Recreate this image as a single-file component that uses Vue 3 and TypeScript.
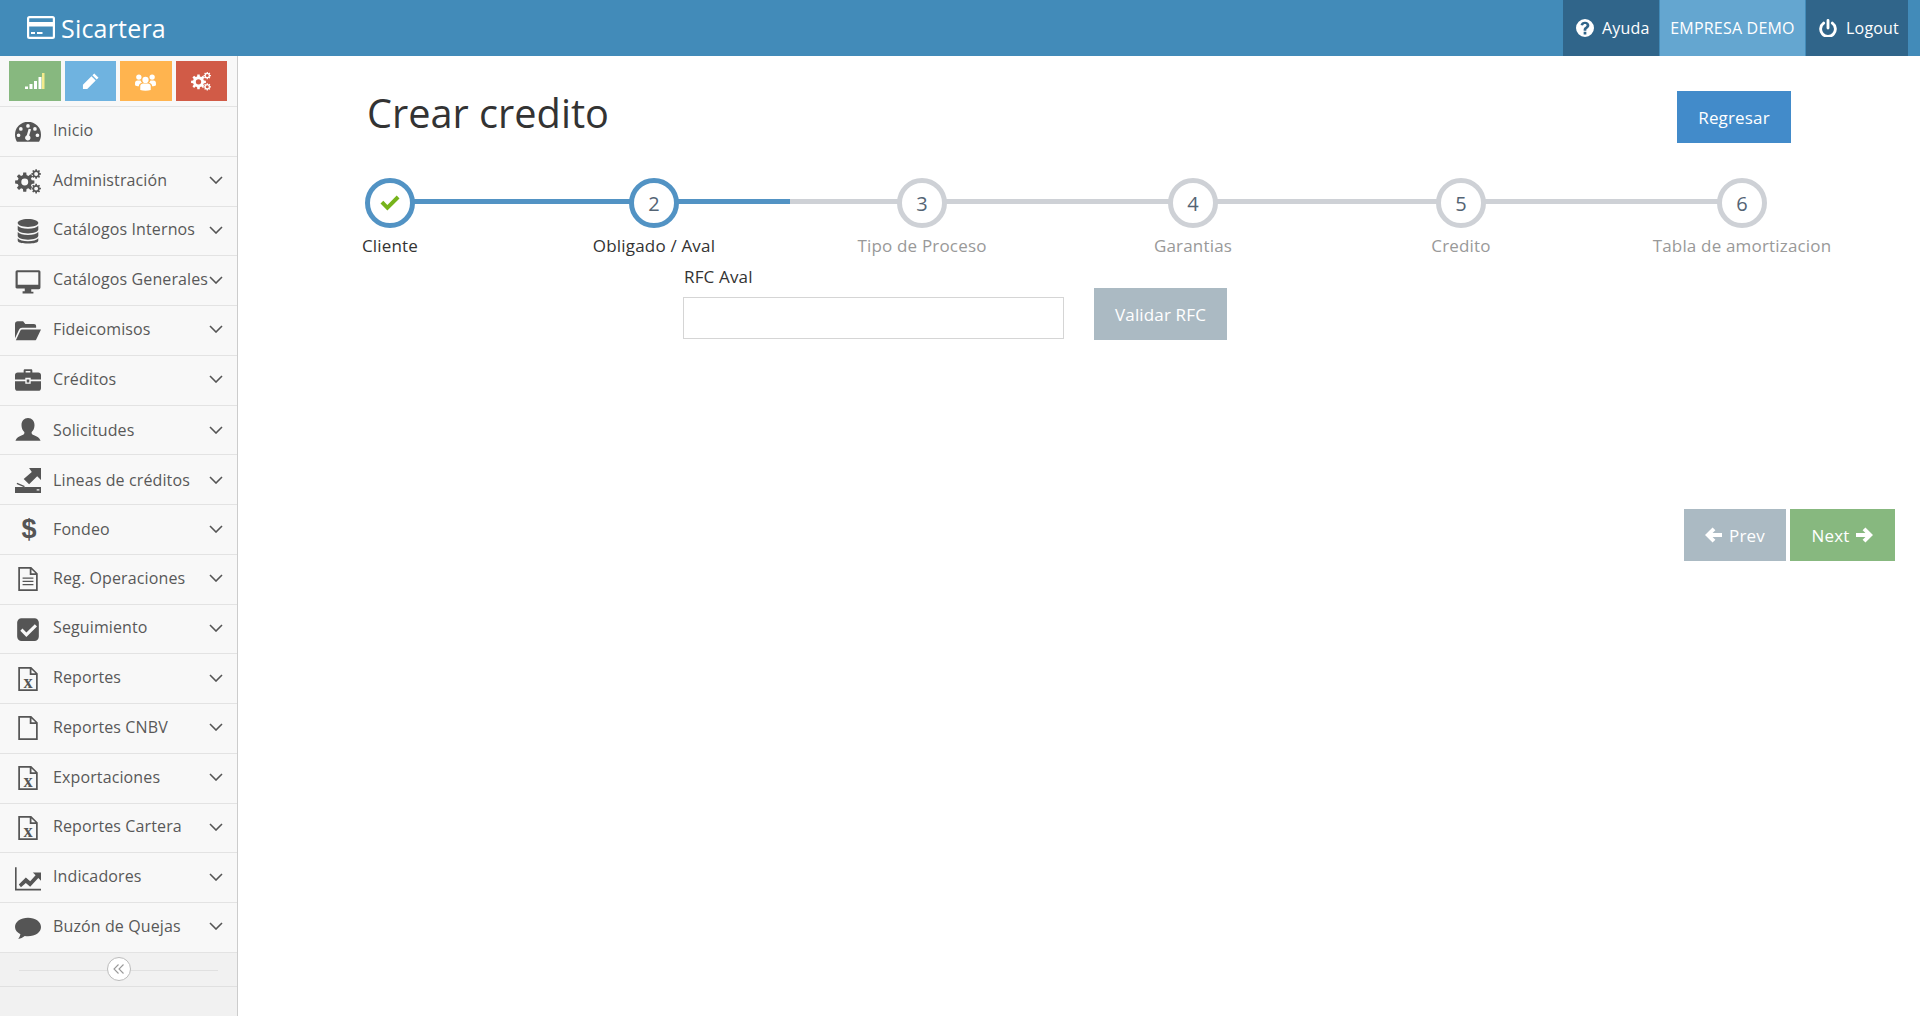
<script setup lang="ts">
function gear(cx: number, cy: number, r: number, hole: number, teeth: number): string {
  const out: string[] = []
  const step = (Math.PI * 2) / teeth
  const tip = r
  const root = r * 0.74
  for (let i = 0; i < teeth; i++) {
    const a = i * step
    const w = step * 0.2
    const pts: [number, number][] = [
      [root, a - step * 0.32],
      [tip, a - w],
      [tip, a + w],
      [root, a + step * 0.32]
    ]
    for (const [rad, ang] of pts) {
      const x = cx + rad * Math.cos(ang)
      const y = cy + rad * Math.sin(ang)
      out.push(`${out.length === 0 ? 'M' : 'L'}${x.toFixed(2)} ${y.toFixed(2)}`)
    }
  }
  out.push('Z')
  out.push(`M${cx - hole} ${cy}a${hole} ${hole} 0 1 0 ${hole * 2} 0a${hole} ${hole} 0 1 0 ${-hole * 2} 0Z`)
  return out.join('')
}

const cogs = gear(9, 13, 9, 3.2, 8)
const smallCogs = [gear(19.5, 5.5, 4.5, 1.8, 8), gear(19.5, 19, 4.5, 1.8, 8)]
const allCogs = cogs + smallCogs.join('')

const fileOutline = 'M3 1h12l6 6v16H3ZM4.6 2.6v18.8h14.8V8.4H13.6V2.6ZM15.2 3.2v3.6h3.6Z'
const icons: Record<string, string> = {
  dashboard:
    'M12 3.5A12 12 0 0 0 0 15.5c0 2.6.7 4.7 1.8 6.5h20.4c1.1-1.8 1.8-3.9 1.8-6.5a12 12 0 0 0-12-12ZM12 5.6a1.7 1.7 0 1 1 0 3.4a1.7 1.7 0 1 1 0-3.4ZM5.4 8.4a1.7 1.7 0 1 1 0 3.4a1.7 1.7 0 1 1 0-3.4ZM3.3 14.2a1.7 1.7 0 1 1 0 3.4a1.7 1.7 0 1 1 0-3.4ZM20.7 14.2a1.7 1.7 0 1 1 0 3.4a1.7 1.7 0 1 1 0-3.4ZM18.4 8.4a1.7 1.7 0 1 1 0 3.4a1.7 1.7 0 1 1 0-3.4ZM14.8 10.4l-1.7 5.8a2.5 2.5 0 1 1-2.2-.2l1.7-6Z',
  cogs: allCogs,
  database:
    'M12 1c5.5 0 9.5 1.6 9.5 3.6S17.5 8.2 12 8.2S2.5 6.6 2.5 4.6S6.5 1 12 1ZM2.5 7.2C4 9 7.6 9.9 12 9.9s8-.9 9.5-2.7v3.4c0 2-4 3.6-9.5 3.6s-9.5-1.6-9.5-3.6ZM2.5 13c1.500 1.800 5.100 2.700 9.500 2.700s8-.9 9.500-2.700v3.400c0 2-4 3.600-9.500 3.600s-9.500-1.600-9.500-3.600ZM2.500 18.800c1.500 1.800 5.100 2.700 9.500 2.700s8-.9 9.500-2.700v1.900c0 2-4 2.800-9.500 2.800s-9.500-.8-9.500-2.800Z',
  desktop:
    'M2 2h20a1.500 1.500 0 0 1 1.500 1.500v14.500a1.500 1.500 0 0 1-1.500 1.500H15v2.500h2v1.500H7V21.500h2v-2.500H2A1.500 1.500 0 0 1 .5 18V3.500A1.500 1.500 0 0 1 2 2ZM2.500 4v11.500h19V4Z',
  folder:
    'M0 6.500C0 5 1 4 2.500 4h5l2 2.500h8c1.200 0 2 .8 2 2V10H6.500c-1.300 0-2.300.7-2.800 1.800L0 19.500ZM6.500 11.500h17.500l-4.400 9.200c-.3.6-.8.8-1.400.8H.8l4.200-9c.3-.6.800-1 1.500-1Z',
  briefcase:
    'M8 5V3.200C8 2.500 8.500 2 9.200 2h5.600c.7 0 1.200.5 1.200 1.200V5h5.500C23 5 24 6 24 7.500V11.500H14.500V10h-5v1.500H0V7.500C0 6 1 5 2.500 5ZM9.800 3.800V5h4.400V3.800ZM0 13.200h9.500v2.300h5v-2.300H24v6.300c0 1.500-1 2.500-2.500 2.500h-19C1 22 0 21 0 19.500ZM10.800 11.500h2.400v2.800h-2.400Z',
  user:
    'M12 1c3.600 0 6 2.800 6 6.500c0 2.700-1.100 5-2.600 6.300c-.4 1.500.4 2.300 2.200 3c2.800 1 5 2.200 6 5.200H.4c1-3 3.200-4.200 6-5.200c1.800-.7 2.600-1.500 2.200-3C7.100 12.500 6 10.200 6 7.500C6 3.800 8.400 1 12 1Z',
  lines:
    'M13 1H24V12L20.500 8.500L13 16L8 11L15.500 4.500ZM2 14.500L9 17.500L8.500 18.800L1.500 15.800ZM0 18.500H24V24H0ZM20 20.500v1.200h2.500v-1.200Z',
  filetext: fileOutline + 'M7 10.500h10v1.300H7ZM7 13.500h10v1.300H7ZM7 16.500h10v1.300H7Z',
  check:
    'M6 2H18a4 4 0 0 1 4 4V19a4 4 0 0 1-4 4H6a4 4 0 0 1-4-4V6a4 4 0 0 1 4-4ZM18.300 7.500L10.500 15.200L6.900 11.600L4.900 13.700L10.500 19.300L20.300 9.600Z',
  excel: fileOutline,
  file: fileOutline,
  chart:
    'M0 2H1.500V22H24V23.500H0ZM3.500 18L10 11.500L14 15L19 9.500L16.500 7H24V14.500L21.500 12L14 20L10 16.500L5.500 20.500Z',
  comment:
    'M12 3.500c6.600 0 12 3.500 12 8.500s-5.400 8.500-12 8.500c-1 0-2-.1-3-.3c-1.800 1.500-3.800 2.300-6 2.800c1-1.300 1.700-2.800 2-4.400C2.100 17.200 0 14.800 0 12C0 7 5.400 3.500 12 3.500Z'
}

interface MenuItem {
  label: string
  icon: string
  arrow?: boolean
  nudge?: 'up' | 'down'
}

const menu: MenuItem[] = [
  { label: 'Inicio', icon: 'dashboard' },
  { label: 'Administración', icon: 'cogs', arrow: true },
  { label: 'Catálogos Internos', icon: 'database', arrow: true, nudge: 'up' },
  { label: 'Catálogos Generales', icon: 'desktop', arrow: true, nudge: 'up' },
  { label: 'Fideicomisos', icon: 'folder', arrow: true },
  { label: 'Créditos', icon: 'briefcase', arrow: true },
  { label: 'Solicitudes', icon: 'user', arrow: true, nudge: 'down' },
  { label: 'Lineas de créditos', icon: 'lines', arrow: true, nudge: 'down' },
  { label: 'Fondeo', icon: 'dollar', arrow: true, nudge: 'down' },
  { label: 'Reg. Operaciones', icon: 'filetext', arrow: true },
  { label: 'Seguimiento', icon: 'check', arrow: true, nudge: 'up' },
  { label: 'Reportes', icon: 'excel', arrow: true, nudge: 'up' },
  { label: 'Reportes CNBV', icon: 'file', arrow: true },
  { label: 'Exportaciones', icon: 'excel', arrow: true },
  { label: 'Reportes Cartera', icon: 'excel', arrow: true, nudge: 'up' },
  { label: 'Indicadores', icon: 'chart', arrow: true, nudge: 'up' },
  { label: 'Buzón de Quejas', icon: 'comment', arrow: true }
]

interface Step {
  label: string
  num: string
  state: 'done' | 'active' | 'todo'
}

const steps: Step[] = [
  { label: 'Cliente', num: '', state: 'done' },
  { label: 'Obligado / Aval', num: '2', state: 'active' },
  { label: 'Tipo de Proceso', num: '3', state: 'todo' },
  { label: 'Garantias', num: '4', state: 'todo' },
  { label: 'Credito', num: '5', state: 'todo' },
  { label: 'Tabla de amortizacion', num: '6', state: 'todo' }
]
</script>

<template>
  <div class="page">
    <header class="topbar">
      <div class="brand">
        <svg class="brand-icon" viewBox="0 0 28 23" width="28" height="23">
          <path fill="#fff" fill-rule="evenodd" d="M2.500 0H25.500A2.500 2.500 0 0 1 28 2.500V20.500A2.500 2.500 0 0 1 25.500 23H2.500A2.500 2.500 0 0 1 0 20.500V2.500A2.500 2.500 0 0 1 2.500 0ZM2.500 2.200a.3.3 0 0 0-.3.3V6H25.800V2.500a.3.3 0 0 0-.3-.3ZM2.200 10.500V20.500a.3.3 0 0 0 .3.3H25.500a.3.3 0 0 0 .3-.3V10.500ZM4 16H8V18H4ZM10 16H15.500V18H10Z" />
        </svg>
        <span>Sicartera</span>
      </div>
      <nav class="top-nav">
        <a class="top-link dark">
          <svg viewBox="0 0 24 24" width="18" height="18">
            <path fill="#fff" fill-rule="evenodd" d="M12 0a12 12 0 1 1 0 24a12 12 0 1 1 0-24ZM10.200 17v3.500h3.600V17ZM12 3.500c-3.200 0-5.400 1.500-6 4.500l3.300.8c.4-1.500 1.200-2.200 2.600-2.200c1.300 0 2.200.7 2.200 1.700c0 .9-.5 1.400-1.700 2.200c-1.600 1.100-2.200 2.200-2.200 3.700v1.300h3.600V14.500c0-.8.400-1.200 1.500-2c1.600-1.100 2.500-2.300 2.500-4.100c0-3-2.500-4.900-5.800-4.900Z" />
          </svg>
          Ayuda
        </a>
        <a class="top-link light">EMPRESA DEMO</a>
        <a class="top-link dark logout">
          <svg viewBox="0 0 24 24" width="18" height="18">
            <path fill="none" stroke="#fff" stroke-width="3.800" stroke-linecap="round" d="M12 2v10M6.200 5.500a9.800 9.800 0 1 0 11.600 0" />
          </svg>
          Logout
        </a>
      </nav>
    </header>

    <div class="body">
      <aside class="sidebar">
        <div class="shortcuts">
          <button class="sc green">
            <svg viewBox="0 0 20 16" width="20" height="16">
              <path fill="#fff" d="M0 13.500h3V16H0ZM4.500 11h3v5h-3ZM9 8h3v8H9ZM13.500 4h3v12h-3Z" />
              <path fill="#f3eb8c" d="M17 0h2.500v16H17Z" />
            </svg>
          </button>
          <button class="sc blue">
            <svg viewBox="0 0 18 18" width="17" height="17">
              <path fill="#fff" d="M13 0.500l4.500 4.500l-2 2l-4.500-4.500ZM10 3.500l4.500 4.500L5.500 17H1v-4.500Z" />
            </svg>
          </button>
          <button class="sc orange">
            <svg viewBox="0 0 22 20" width="21" height="19">
              <path fill="#fff" d="M11 5a3.300 3.300 0 1 1 0 6.600a3.300 3.300 0 1 1 0-6.600ZM4 2.500a2.800 2.800 0 1 1 0 5.600a2.800 2.800 0 1 1 0-5.600ZM18 2.500a2.800 2.800 0 1 1 0 5.600a2.800 2.800 0 1 1 0-5.600ZM5.500 19V15c0-2 1.500-3 3-3h5c1.500 0 3 1 3 3v4c-3 1-8 1-11 0ZM0 14v-2.500C0 10 1 9 2.500 9h3.300c.3 1 .8 1.800 1.500 2.300c-2 .5-3.300 1.800-3.300 3.700c-1.500 0-3-.3-4-1ZM22 14v-2.500C22 10 21 9 19.500 9h-3.300c-.3 1-.8 1.800-1.500 2.300c2 .5 3.300 1.800 3.300 3.700c1.500 0 3-.3 4-1Z" />
            </svg>
          </button>
          <button class="sc red">
            <svg viewBox="0 0 24 24" width="20" height="20">
              <path fill="#fff" fill-rule="evenodd" :d="allCogs" />
            </svg>
          </button>
        </div>
        <ul class="menu">
          <li v-for="item in menu" :key="item.label" class="menu-item" :class="item.nudge">
            <span class="menu-icon">
              <span v-if="item.icon === 'dollar'" class="dollar">$</span>
              <svg v-else viewBox="0 0 24 24" width="26" height="26">
                <path fill="#555" fill-rule="evenodd" :d="icons[item.icon]" />
                <text v-if="item.icon === 'excel'" x="12" y="20" text-anchor="middle" class="xmark">x</text>
              </svg>
            </span>
            <span class="menu-label">{{ item.label }}</span>
            <svg v-if="item.arrow" class="chev" viewBox="0 0 14 8" width="14" height="8">
              <path fill="none" stroke="#555" stroke-width="1.600" d="M1 1l6 6l6-6" />
            </svg>
          </li>
        </ul>
        <div class="collapse">
          <span class="collapse-btn">
            <svg viewBox="0 0 12 10" width="12" height="10">
              <path fill="none" stroke="#999" stroke-width="1.100" d="M5.500 .5L1 5l4.500 4.500M10.500 .5L6 5l4.500 4.500" />
            </svg>
          </span>
        </div>
      </aside>

      <main class="main">
        <div class="title-row">
          <h1>Crear credito</h1>
          <button class="btn regresar">Regresar</button>
        </div>

        <div class="steps">
          <div v-for="s in steps" :key="s.label" class="step" :class="s.state">
            <span class="circle">
              <svg v-if="s.state === 'done'" viewBox="0 0 20 16" width="20" height="16">
                <path fill="#76b31b" d="M7.400 15.500L.5 8.600L3.300 5.800L7.400 9.900L16.700.6L19.500 3.400Z" />
              </svg>
              <template v-else>{{ s.num }}</template>
            </span>
            <span class="step-label">{{ s.label }}</span>
          </div>
        </div>

        <form class="rfc" @submit.prevent>
          <div class="field">
            <label for="rfc">RFC Aval</label>
            <input id="rfc" type="text" />
          </div>
          <button class="btn validar" type="button">Validar RFC</button>
        </form>

        <div class="pager">
          <button class="btn prev">
            <svg viewBox="0 0 18 16" width="17" height="16">
              <path fill="#fff" d="M8 0L11 3L8 5.800H18V10.200H8L11 13L8 16L0 8Z" />
            </svg>
            Prev
          </button>
          <button class="btn next">
            Next
            <svg viewBox="0 0 18 16" width="17" height="16">
              <path fill="#fff" d="M10 0L7 3L10 5.800H0V10.200H10L7 13L10 16L18 8Z" />
            </svg>
          </button>
        </div>
      </main>
    </div>
  </div>
</template>

<style>
html,
body {
  margin: 0;
  background: #fff;
}
</style>

<style scoped>
.page {
  width: 1920px;
  height: 1016px;
  display: flex;
  flex-direction: column;
  overflow: hidden;
  font-family: "Open Sans", "Liberation Sans", sans-serif;
  color: #333;
}
.topbar {
  height: 56px;
  flex: none;
  background: #428bb9;
  display: flex;
  justify-content: space-between;
  padding-right: 12px;
}
.brand {
  display: flex;
  align-items: center;
  gap: 6px;
  padding-left: 27px;
  color: #fff;
  font-size: 25px;
  letter-spacing: .2px;
}
.brand-icon {
  margin-top: -1px;
}
.top-nav {
  display: flex;
  gap: 1px;
}
.top-link {
  display: flex;
  align-items: center;
  justify-content: center;
  box-sizing: border-box;
  color: #fff;
  font-size: 16px;
  letter-spacing: .2px;
  gap: 8px;
}
.top-link.dark {
  background: #30658a;
  width: 96px;
  justify-content: flex-start;
  padding-left: 13px;
}
.top-link.logout {
  width: 102px;
  gap: 9px;
}
.top-link.light {
  background: #64a6d0;
  width: 145px;
}
.body {
  flex: 1;
  display: flex;
  min-height: 0;
}
.sidebar {
  width: 237px;
  flex: none;
  background: #f1f1f1;
  border-right: 1px solid #cccccc;
  display: flex;
  flex-direction: column;
}
.shortcuts {
  height: 51px;
  box-sizing: border-box;
  padding: 5px 10px 0 9px;
  display: flex;
  gap: 4px;
  background: #f8f8f8;
  border-bottom: 1px solid #e3e3e3;
}
.sc {
  flex: 1;
  height: 40px;
  border: 0;
  padding: 0;
  display: flex;
  align-items: center;
  justify-content: center;
}
.sc.green {
  background: #87b87f;
}
.sc.blue {
  background: #6fb3e0;
}
.sc.orange {
  background: #ffb44f;
}
.sc.red {
  background: #d15b47;
}
.menu {
  list-style: none;
  margin: 0;
  padding: 0;
}
.menu-item {
  height: 49.76px;
  box-sizing: border-box;
  display: flex;
  align-items: center;
  padding: 0 14px 0 15px;
  background: #f8f8f8;
  border-bottom: 1px solid #e3e3e3;
  color: #585858;
  font-size: 16px;
  letter-spacing: .12px;
}
.menu-label {
  flex: 1;
  white-space: nowrap;
  min-width: 0;
  transform: translateY(-1px);
}
.menu-item.up .menu-label {
  transform: translateY(-2px);
}
.menu-item.down .menu-label {
  transform: translateY(0);
}
.menu-item.up .chev {
  transform: translateY(-1px);
}
.menu-item.down .chev {
  transform: translateY(0);
}
.menu-icon {
  width: 38px;
  flex: none;
  display: flex;
  align-items: center;
  justify-content: flex-start;
}
.dollar {
  width: 28px;
  text-align: center;
  font-family: "Liberation Sans", sans-serif;
  font-weight: 700;
  font-size: 27px;
  letter-spacing: 0;
  color: #555;
  line-height: 26px;
}
.xmark {
  font-family: "Liberation Serif", serif;
  font-weight: 700;
  font-size: 17px;
  letter-spacing: 0;
  fill: #555;
}
.chev {
  flex: none;
  transform: translateY(-1px);
}
.collapse {
  height: 33px;
  flex: none;
  position: relative;
  display: flex;
  align-items: center;
  justify-content: center;
  border-bottom: 1px solid #e0e0e0;
}
.collapse::before {
  content: "";
  position: absolute;
  left: 19px;
  right: 19px;
  top: 17px;
  height: 1px;
  background: #e0e0e0;
}
.collapse-btn {
  position: relative;
  width: 24px;
  height: 24px;
  box-sizing: border-box;
  border: 1px solid #bbb;
  border-radius: 50%;
  background: #fff;
  display: flex;
  align-items: center;
  justify-content: center;
}
.main {
  flex: 1;
  min-width: 0;
  display: flex;
  flex-direction: column;
  padding: 35px 25px 0 24px;
}
.title-row {
  display: flex;
  justify-content: space-between;
  align-items: flex-start;
  padding-left: 105px;
  padding-right: 104px;
  height: 87px;
}
h1 {
  margin: 0;
  font-size: 39.700px;
  font-weight: 400;
  line-height: 44px;
  color: #333;
}
.btn {
  border: 0;
  padding: 0;
  color: #fff;
  font-family: inherit;
  font-size: 17px;
  letter-spacing: .15px;
  display: flex;
  align-items: center;
  justify-content: center;
  gap: 7px;
  height: 52px;
}
.regresar {
  width: 114px;
  background: #428bca;
}
.steps {
  display: grid;
  grid-template-columns: 256px 272px 264px 278px 258px 304px;
}
.step {
  position: relative;
  display: flex;
  flex-direction: column;
  align-items: center;
  gap: 6px;
  font-size: 17px;
  letter-spacing: .18px;
  color: #999;
}
.step::before,
.step::after {
  content: "";
  position: absolute;
  top: 21px;
  height: 5px;
  width: 50%;
  background: #ced1d6;
}
.step::before {
  left: 0;
}
.step::after {
  right: 0;
}
.step:first-child::before,
.step:last-child::after {
  display: none;
}
.step.done::after,
.step.active::before,
.step.active::after {
  background: #5293c4;
}
.circle {
  position: relative;
  z-index: 1;
  width: 50px;
  height: 50px;
  box-sizing: border-box;
  border: 5px solid #ced1d6;
  border-radius: 50%;
  background: #fff;
  color: #546474;
  font-size: 20px;
  letter-spacing: 0;
  display: flex;
  align-items: center;
  justify-content: center;
}
.done .circle,
.active .circle {
  border-color: #5293c4;
}
.done .step-label,
.active .step-label {
  color: #333;
}
.step-label {
  line-height: 24px;
  white-space: nowrap;
}
.rfc {
  display: flex;
  align-items: flex-end;
  gap: 30px;
  padding-left: 421px;
  margin-top: 8px;
}
.field {
  display: flex;
  flex-direction: column;
  gap: 9px;
  margin-bottom: 1px;
}
.field label {
  font-size: 17px;
  letter-spacing: .15px;
  line-height: 22px;
  padding-left: 1px;
  color: #333;
}
.field input {
  width: 381px;
  height: 42px;
  box-sizing: border-box;
  border: 1px solid #d5d5d5;
  background: #fff;
  padding: 0;
  outline: 0;
}
.validar {
  width: 133px;
  background: #abbac3;
}
.pager {
  display: flex;
  justify-content: flex-end;
  gap: 4px;
  margin-top: 169px;
}
.prev {
  width: 102px;
  background: #abbac3;
}
.next {
  width: 105px;
  background: #87b87f;
}
</style>
